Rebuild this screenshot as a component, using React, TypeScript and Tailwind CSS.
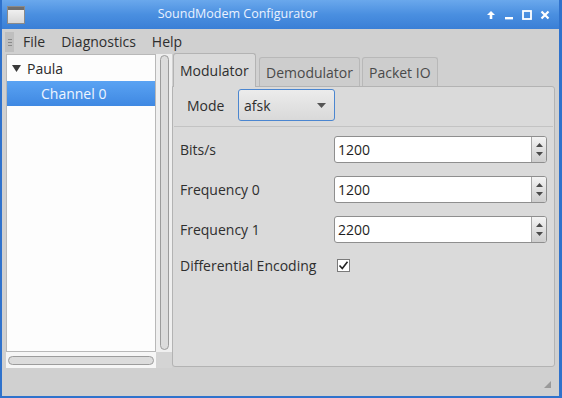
import React from 'react';

function SpinBox({ value }: { value: string }) {
  return (
    <div className="flex w-[213px] h-[27px] border border-[#8e8e8e] rounded-[3px] bg-white overflow-hidden">
      <div className="flex-1 flex items-center pl-[3px] text-[#1e1e1e]">{value}</div>
      <div className="w-[15px] flex flex-col items-center justify-center gap-[5px] border-l border-[#a6a6a6] bg-gradient-to-b from-[#f4f4f4] to-[#cdcdcd]">
        <svg width="7" height="4" viewBox="0 0 7 4"><path d="M3.5 0 L7 4 L0 4 Z" fill="#4a4a4a" /></svg>
        <svg width="7" height="4" viewBox="0 0 7 4"><path d="M0 0 L7 0 L3.5 4 Z" fill="#4a4a4a" /></svg>
      </div>
    </div>
  );
}

export default function App() {
  return (
    <div className="w-[562px] h-[398px] flex flex-col bg-[#d0d0d0] border-l-2 border-r-[3px] border-b-2 border-[#2f72cc] font-['Open_Sans',sans-serif] text-[14px] text-[#2e2e2e] overflow-hidden">
      {/* Title bar */}
      <div className="h-[29px] flex items-center bg-gradient-to-b from-[#6aa8ec] via-[#4a8fe0] to-[#3a7fd6] shrink-0">
        <div className="ml-[5px] w-[18px] h-[18px] flex flex-col border border-[#8a8a8a] bg-gradient-to-b from-[#f6f6f6] to-[#d6d6d6]">
          <div className="h-[3px] bg-[#6e6e6e]" />
        </div>
        <div className="flex-1 text-center pr-[36px] text-[12.5px] text-[#eaf2ff]">SoundModem Configurator</div>
        <div className="flex items-center gap-[8px] mr-[9px]">
          <svg width="10" height="10" viewBox="0 0 10 10"><path d="M5 1 L9 5 H6.3 V9 H3.7 V5 H1 Z" fill="#fff" /></svg>
          <svg width="10" height="10" viewBox="0 0 10 10"><rect x="1" y="7" width="8" height="2.4" fill="#fff" /></svg>
          <svg width="10" height="10" viewBox="0 0 10 10"><rect x="1" y="1" width="8" height="8" fill="none" stroke="#fff" strokeWidth="1.8" /></svg>
          <svg width="10" height="10" viewBox="0 0 10 10"><path d="M1.5 1.5 L8.5 8.5 M8.5 1.5 L1.5 8.5" stroke="#fff" strokeWidth="2.2" /></svg>
        </div>
      </div>

      {/* Menu bar */}
      <div className="h-[24px] flex items-center shrink-0">
        <div className="ml-[3px] w-[9px] h-[20px] mt-[2px] bg-[#bfbfbf] flex flex-col items-center justify-center gap-[2px]">
          <div className="w-[4px] h-px bg-[#8a8a8a]" />
          <div className="w-[4px] h-px bg-[#8a8a8a]" />
          <div className="w-[4px] h-px bg-[#8a8a8a]" />
        </div>
        <div className="flex ml-[1px]">
          <span className="px-[8px]">File</span>
          <span className="px-[8px]">Diagnostics</span>
          <span className="px-[8px]">Help</span>
        </div>
      </div>

      {/* Main */}
      <div className="flex-1 flex pl-[4px] pr-[1px]">
        {/* Left tree column */}
        <div className="w-[166px] flex flex-col pt-[1px]">
          <div className="flex-1 flex">
            <div className="w-[150px] border border-[#b8b8b8] bg-[#fdfdfd] flex flex-col">
              <div className="h-[26px] flex items-center pl-[5px]">
                <svg width="9" height="7" viewBox="0 0 9 7" className="mr-[6px]"><path d="M0 0 H9 L4.5 7 Z" fill="#3a3a3a" /></svg>
                <span className="text-[#2a2a2a]">Paula</span>
              </div>
              <div className="h-[25px] flex items-center pl-[34px] bg-gradient-to-b from-[#5aa3f3] to-[#3f88e2] text-[#eef5ff]">Channel 0</div>
            </div>
            <div className="w-[16px] bg-[#efefef] flex justify-center pt-[1px] pb-[2px] pl-[1px]">
              <div className="w-[9px] rounded-full border border-[#9c9c9c] bg-[#dcdcdc]" />
            </div>
          </div>
          <div className="h-[16px] flex">
            <div className="w-[150px] bg-[#f6f6f6] flex items-center px-[2px]">
              <div className="w-full h-[9px] rounded-full border border-[#9c9c9c] bg-[#dcdcdc]" />
            </div>
            <div className="flex-1 bg-[#d4d4d4]" />
          </div>
        </div>

        {/* Right tab widget */}
        <div className="w-[383px] flex flex-col pb-[1px]">
          <div className="h-[33px] flex items-end pl-[1px]">
            <div className="w-[83px] h-[34px] -mb-px relative z-10 rounded-t-[3px] border border-b-0 border-[#b3b3b3] bg-[#dadada] pl-[6px] flex items-center">Modulator</div>
            <div className="ml-[3px] w-[101px] h-[29px] rounded-t-[3px] border border-b-0 border-[#b8b8b8] bg-[#cdcdcd] pl-[6px] flex items-center text-[#4a4a4a]">Demodulator</div>
            <div className="ml-[2px] w-[76px] h-[29px] rounded-t-[3px] border border-b-0 border-[#b8b8b8] bg-[#cdcdcd] pl-[6px] flex items-center text-[#4a4a4a]">Packet IO</div>
          </div>
          <div className="flex-1 border border-[#b3b3b3] rounded-[3px] rounded-tl-none bg-[#dadada] flex flex-col">
            <div className="mt-[2px] h-[32px] flex items-center pl-[14px]">
              <span className="w-[51px]">Mode</span>
              <div className="w-[97px] h-[32px] flex items-center justify-between border border-[#4b86d0] rounded-[3px] bg-gradient-to-b from-[#ececec] to-[#d9d9d9] pl-[5px] pr-[8px]">
                <span>afsk</span>
                <svg width="9" height="5" viewBox="0 0 9 5"><path d="M0 0 H9 L4.5 5 Z" fill="#555" /></svg>
              </div>
            </div>
            <div className="mt-[5px] mx-[1px] h-px bg-[#c3c3c3]" />
            <div className="mt-[9px] flex flex-col gap-[13px] pl-[7px]">
              <div className="flex items-center">
                <span className="w-[154px]">Bits/s</span>
                <SpinBox value="1200" />
              </div>
              <div className="flex items-center">
                <span className="w-[154px]">Frequency 0</span>
                <SpinBox value="1200" />
              </div>
              <div className="flex items-center">
                <span className="w-[154px]">Frequency 1</span>
                <SpinBox value="2200" />
              </div>
              <div className="flex items-center h-[20px] -mt-px">
                <span className="w-[157px]">Differential Encoding</span>
                <div className="w-[13px] h-[13px] border border-[#7a7a7a] bg-white flex items-center justify-center">
                  <svg width="11" height="11" viewBox="0 0 11 11"><path d="M1.5 5.5 L4.3 8.5 L9.5 1.8" fill="none" stroke="#222" strokeWidth="1.6" /></svg>
                </div>
              </div>
            </div>
          </div>
        </div>
      </div>

      {/* Status bar */}
      <div className="h-[28px] shrink-0 flex items-end justify-end pr-[8px] pb-[8px]">
        <svg width="7" height="7" viewBox="0 0 7 7"><path d="M7 0 V7 H0 Z" fill="#9a9a9a" /></svg>
      </div>
    </div>
  );
}
